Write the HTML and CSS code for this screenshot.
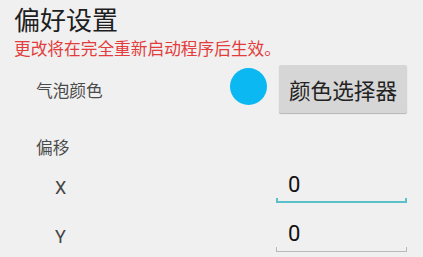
FILE: index.html
```html
<!DOCTYPE html>
<html lang="zh-CN">
<head>
  <meta charset="UTF-8" />
  <meta name="viewport" content="width=device-width, initial-scale=1.0"/>
  <title>偏好设置</title>
  <link rel="stylesheet" href="styles.css">
</head>
<body>
  <div class="prefs">
    <h1 class="title">偏好设置</h1>
    <p class="notice">更改将在完全重新启动程序后生效。</p>

    <div class="color-row">
      <span class="label">气泡颜色</span>
      <span class="swatch"></span>
      <button class="picker">颜色选择器</button>
    </div>

    <div class="group-title">偏移</div>

    <div class="field-row">
      <span class="axis">X</span>
      <div class="field active">
        <div class="value">0</div>
        <div class="line"></div>
      </div>
    </div>
    <div class="field-row second">
      <span class="axis">Y</span>
      <div class="field">
        <div class="value">0</div>
        <div class="line"></div>
      </div>
    </div>
  </div>
</body>
</html>
```

FILE: styles.css
```css
body {
  margin: 0; padding: 0;
  background: #f0f0f0;
  font-family: Roboto, "Noto Sans CJK SC", sans-serif;
  color: #222;
}
.prefs {
  padding: 6px 16px 0 14px;
}
.title {
  margin: 0;
  font-size: 26px; line-height: 30px;
  font-weight: normal;
  color: #1e1e1e;
}
.notice {
  margin: 4px 0 0;
  font-size: 16.7px; line-height: 20px;
  color: #e23c3c;
}
.color-row {
  display: flex;
  align-items: center;
  height: 48px;
  margin-top: 5px;
}
.color-row .label {
  padding-left: 22px;
  padding-top: 5px;
  font-size: 16.7px; line-height: 20px;
  color: #4a4a4a;
}
.swatch {
  width: 37px; height: 37px;
  border-radius: 50%;
  background: #0cb8f2;
  margin-left: auto;
  margin-bottom: 6px;
}
.picker {
  width: 128px; height: 48px;
  margin-left: 12px;
  border: none; border-radius: 2px;
  background: #d6d6d6;
  box-shadow: 0 1px 1px rgba(0,0,0,0.25);
  font-family: "Noto Sans CJK SC", sans-serif;
  font-size: 21.6px;
  color: #222;
  padding: 0;
}
.group-title {
  margin-top: 26px;
  padding-left: 22px;
  font-size: 16.7px; line-height: 20px;
  color: #4a4a4a;
}
.field-row {
  display: flex;
  align-items: center;
  margin-top: 13px;
}
.field-row.second {
  margin-top: 18px;
}
.axis {
  padding-left: 41px;
  font-size: 18px;
  color: #444;
}
.field {
  width: 131px;
  margin-left: auto;
}
.field .value {
  padding-left: 12px;
  font-size: 22px; line-height: 26px;
  color: #111;
}
.field .line {
  height: 4px;
  border: 1px solid #b9b9b9;
  border-top: none;
}
.field.active .line {
  height: 3px;
  border: 2px solid #5ac1cb;
  border-top: none;
}
```
